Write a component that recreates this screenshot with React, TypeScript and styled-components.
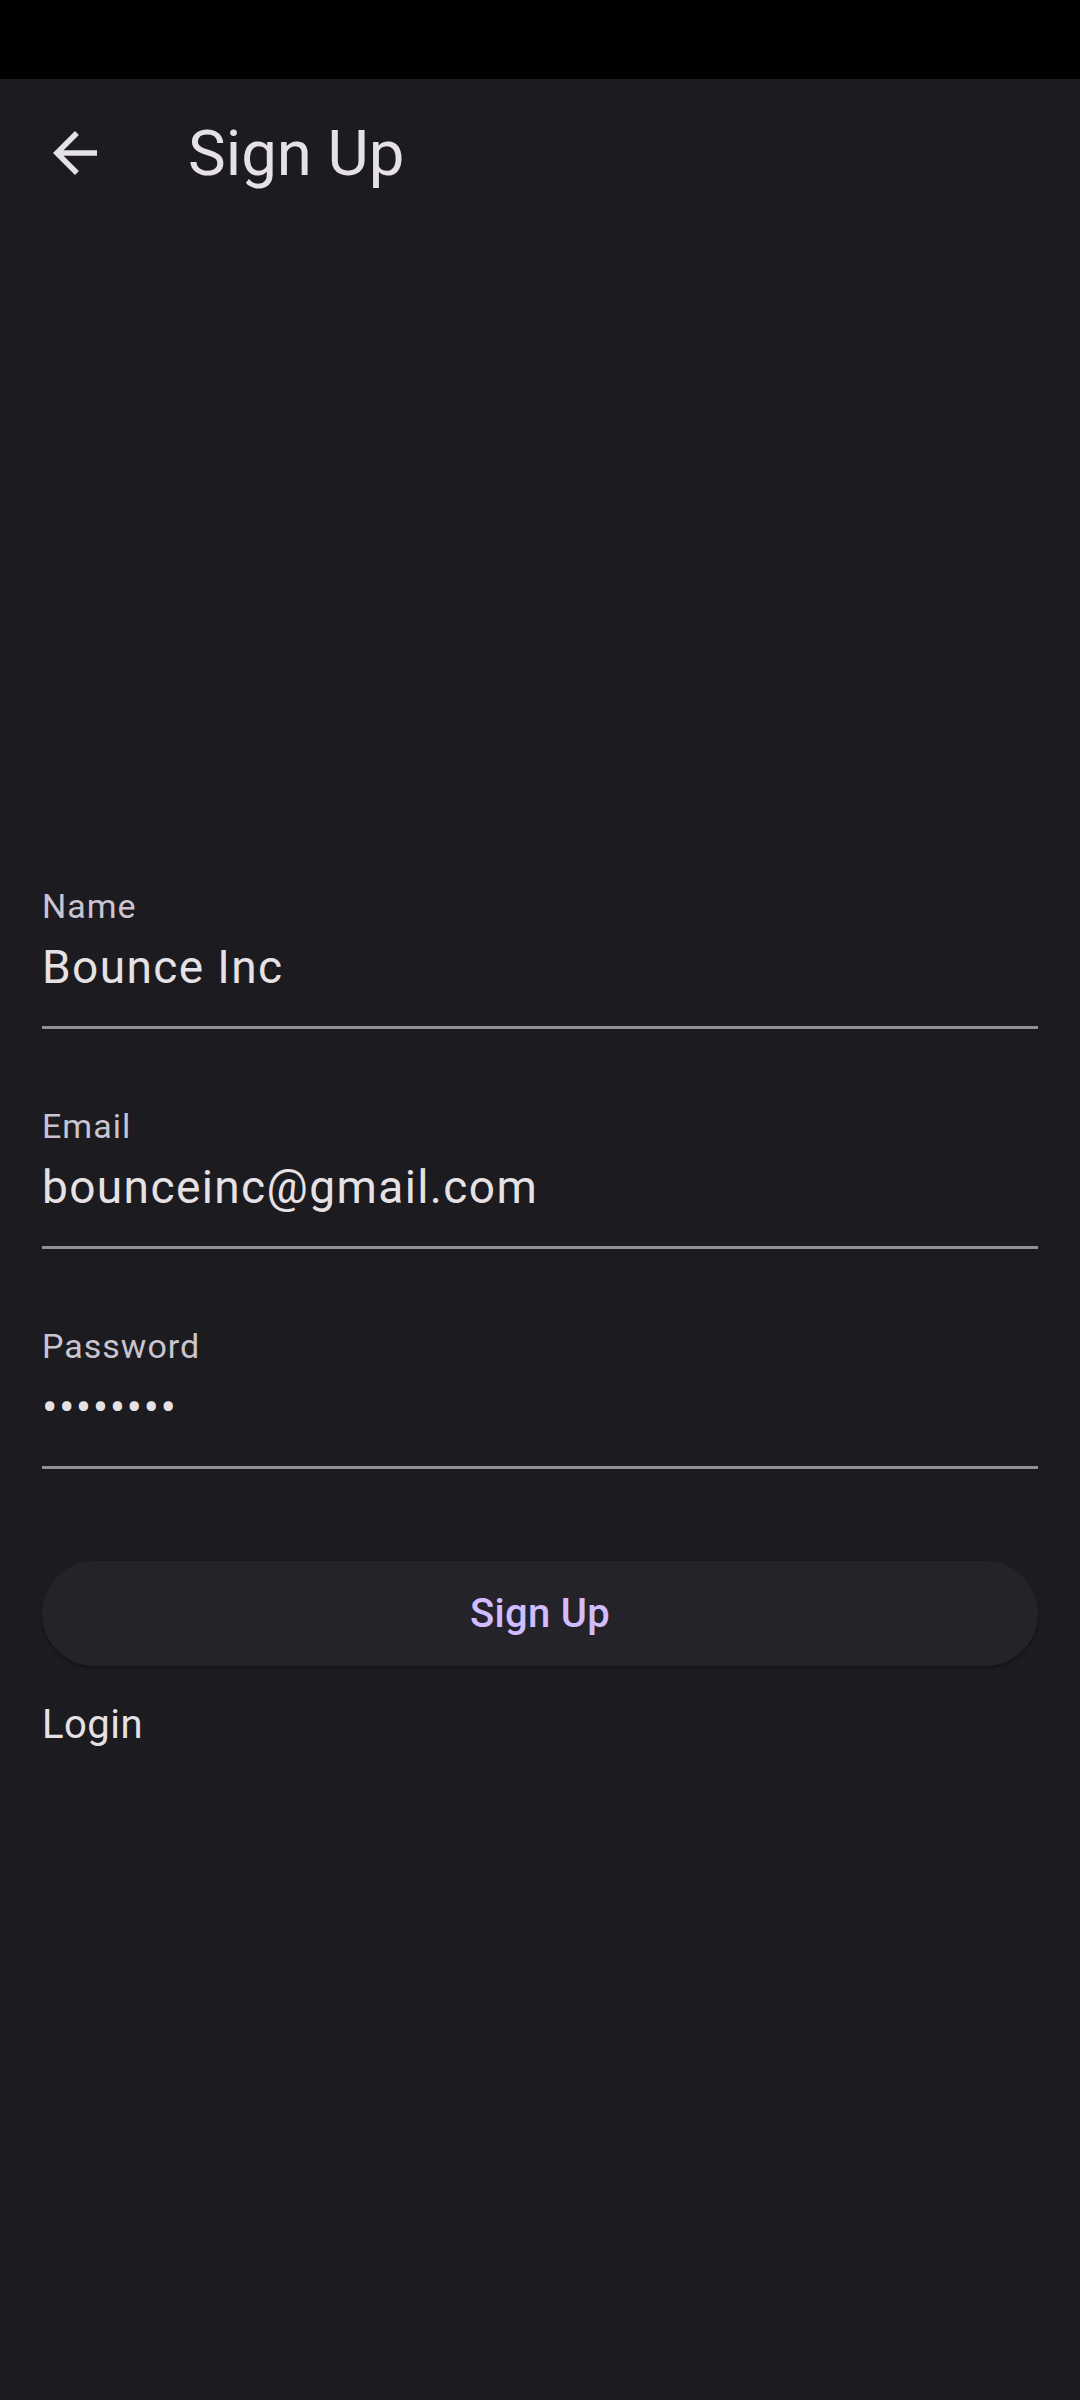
import styled, { createGlobalStyle } from "styled-components";

const GlobalStyle = createGlobalStyle`
  html, body {
    margin: 0;
    padding: 0;
    background: #1c1b1f;
  }
  body {
    font-family: Roboto, "Noto Sans", "Liberation Sans", sans-serif;
    color: #e6e1e5;
  }
`;

const Screen = styled.div`
  display: flex;
  flex-direction: column;
  width: 1080px;
  min-height: 2400px;
  background: #1c1b1f;
`;

const StatusBar = styled.div`
  height: 79px;
  background: #000;
`;

const AppBar = styled.header`
  display: flex;
  align-items: center;
  gap: 80px;
  height: 150px;
  padding-left: 42px;
`;

const IconButton = styled.button`
  display: flex;
  align-items: center;
  justify-content: center;
  width: 66px;
  height: 66px;
  margin-top: -3px;
  padding: 0;
  border: none;
  background: transparent;
  color: #e6e1e5;
  cursor: pointer;
`;

const Title = styled.h1`
  margin: 0;
  font-size: 63.5px;
  font-weight: 400;
  line-height: 72px;
  color: #e6e1e5;
`;

const Form = styled.form`
  display: flex;
  flex-direction: column;
  padding: 657px 42px 0;
`;

const Field = styled.label<{ $first?: boolean }>`
  display: flex;
  flex-direction: column;
  margin-top: ${(p) => (p.$first ? "0" : "77px")};
  padding-bottom: 31px;
  border-bottom: 3px solid #938f99;
`;

const Label = styled.span`
  font-size: 34px;
  line-height: 40px;
  letter-spacing: 1px;
  color: #cac4d0;
`;

const Input = styled.input`
  margin-top: 13px;
  height: 56px;
  padding: 0;
  border: none;
  outline: none;
  background: transparent;
  font-family: inherit;
  font-size: 46px;
  line-height: 56px;
  letter-spacing: 1.4px;
  color: #e6e1e5;
`;

const PrimaryButton = styled.button`
  margin-top: 92px;
  height: 105px;
  border: none;
  border-radius: 53px;
  background: #25232a;
  box-shadow: 0 2px 3px rgba(0, 0, 0, 0.3);
  font-family: inherit;
  font-size: 40px;
  font-weight: 500;
  letter-spacing: 0.3px;
  color: #d0bcff;
  cursor: pointer;
`;

const LinkText = styled.a`
  align-self: flex-start;
  margin-top: 35px;
  font-size: 40px;
  line-height: 48px;
  letter-spacing: 0.5px;
  color: #e6e1e5;
  text-decoration: none;
`;

function BackArrow() {
  return (
    <svg width="66" height="66" viewBox="0 0 24 24" fill="currentColor">
      <path d="M20 11H7.83l5.59-5.59L12 4l-8 8 8 8 1.41-1.41L7.83 13H20v-2z" />
    </svg>
  );
}

export default function App() {
  return (
    <>
      <GlobalStyle />
      <Screen>
        <StatusBar />
        <AppBar>
          <IconButton aria-label="Back">
            <BackArrow />
          </IconButton>
          <Title>Sign Up</Title>
        </AppBar>
        <Form onSubmit={(e) => e.preventDefault()}>
          <Field $first>
            <Label>Name</Label>
            <Input type="text" defaultValue="Bounce Inc" readOnly />
          </Field>
          <Field>
            <Label>Email</Label>
            <Input type="email" defaultValue="bounceinc@gmail.com" readOnly />
          </Field>
          <Field>
            <Label>Password</Label>
            <Input type="password" defaultValue="password" readOnly />
          </Field>
          <PrimaryButton type="submit">Sign Up</PrimaryButton>
          <LinkText href="#">Login</LinkText>
        </Form>
      </Screen>
    </>
  );
}
